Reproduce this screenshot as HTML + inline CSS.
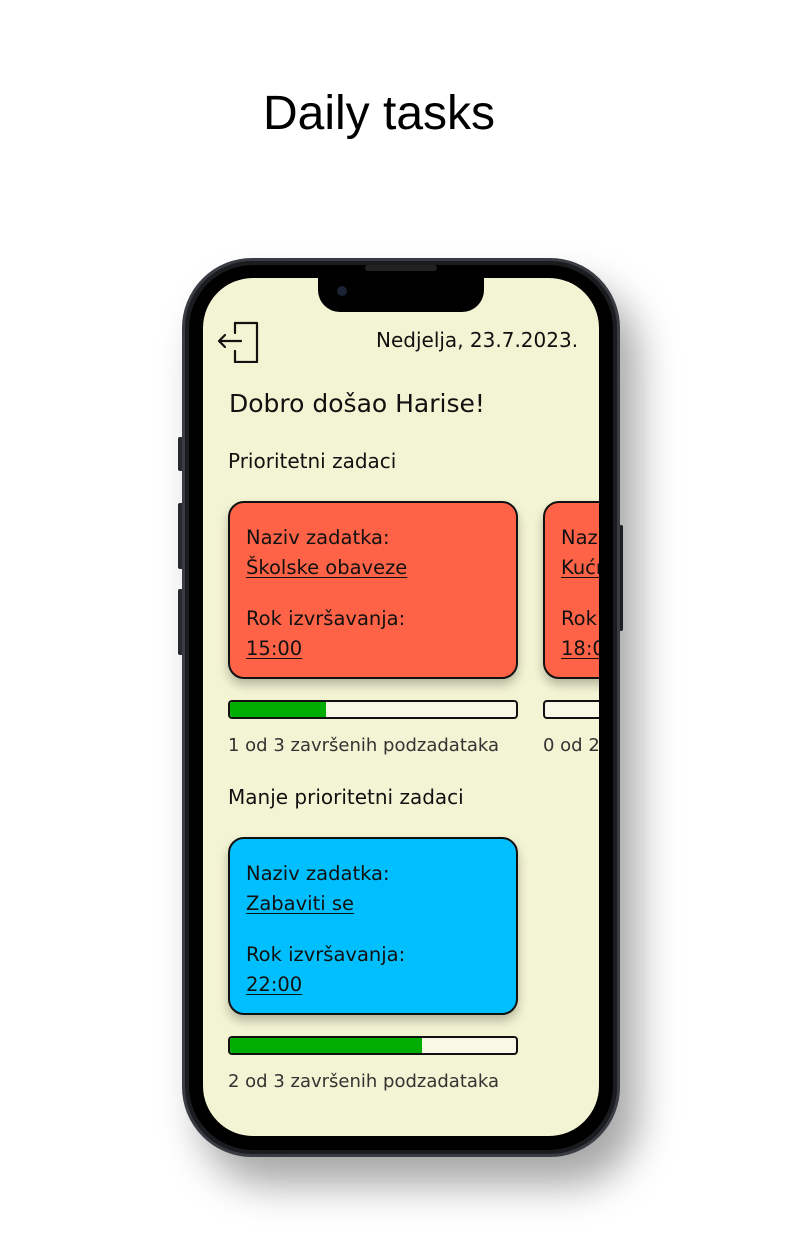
<!DOCTYPE html>
<html><head><meta charset="utf-8"><style>
*{margin:0;padding:0;box-sizing:border-box}
body{width:802px;height:1240px;background:#fff;position:relative;overflow:hidden;font-family:"Liberation Sans",sans-serif}
.a{position:absolute}
.t{font-family:"DejaVu Sans","Liberation Sans",sans-serif;color:#111;white-space:nowrap}
.card{position:absolute;border:2px solid #111;border-radius:16px;box-shadow:0 6px 10px rgba(0,0,0,.25)}
.bar{position:absolute;height:19px;border:2px solid #111;border-radius:4px;background:#f8f8e6;overflow:hidden}
.bar i{position:absolute;left:0;top:0;bottom:0;background:#00ad00}
u{text-underline-offset:3px}
</style></head><body>
<div class="a" style="left:0;top:86px;width:758px;text-align:center;font-size:48px;color:#000">Daily tasks</div>
<!-- side buttons -->
<div class="a" style="left:178px;top:437px;width:6px;height:34px;background:#2a2c33;border-radius:2px"></div>
<div class="a" style="left:178px;top:503px;width:6px;height:66px;background:#2a2c33;border-radius:2px"></div>
<div class="a" style="left:178px;top:589px;width:6px;height:66px;background:#2a2c33;border-radius:2px"></div>
<div class="a" style="left:618px;top:525px;width:5px;height:106px;background:#2a2c33;border-radius:2px"></div>
<!-- body -->
<div class="a" style="left:182px;top:258px;width:438px;height:899px;border-radius:70px;background:#1b1c20;border:3px solid #3a3c44;box-shadow:18px 28px 40px rgba(0,0,0,.35)"></div>
<div class="a" style="left:189px;top:265px;width:424px;height:885px;border-radius:64px;background:#000"></div>
<div class="a" style="left:203px;top:278px;width:396px;height:858px;border-radius:50px;background:#f3f4d3;overflow:hidden">
  <div class="a" style="left:115px;top:-2px;width:166px;height:36px;background:#000;border-radius:0 0 22px 22px"></div>
  <div class="a" style="left:134px;top:8px;width:10px;height:10px;background:#1a2233;border-radius:50%"></div>
  <svg class="a" style="left:14px;top:43px" width="46" height="42" viewBox="0 0 46 42" fill="none" stroke="#111" stroke-width="2.2" stroke-linecap="round" stroke-linejoin="round">
    <path d="M18 2h22v39H18v-11"/><path d="M18 2v10"/><path d="M2 20h22M8 14l-6 6 6 6"/></svg>
  <div class="t a" style="left:173px;top:50px;font-size:20px">Nedjelja, 23.7.2023.</div>
  <div class="t a" style="left:26px;top:111px;font-size:25px">Dobro došao Harise!</div>
  <div class="t a" style="left:25px;top:171px;font-size:20px">Prioritetni zadaci</div>
  <div class="card" style="left:25px;top:223px;width:290px;height:178px;background:#ff6347"></div>
  <div class="t a" style="left:43px;top:245px;font-size:19.5px;line-height:30px">Naziv zadatka:<br><u>Školske obaveze</u></div>
  <div class="t a" style="left:43px;top:326px;font-size:19.5px;line-height:30px">Rok izvršavanja:<br><u>15:00</u></div>
  <div class="card" style="left:340px;top:223px;width:290px;height:178px;background:#ff6347"></div>
  <div class="t a" style="left:358px;top:245px;font-size:19.5px;line-height:30px">Naziv zadatka:<br><u>Kućni poslovi</u></div>
  <div class="t a" style="left:358px;top:326px;font-size:19.5px;line-height:30px">Rok izvršavanja:<br><u>18:00</u></div>
  <div class="bar" style="left:25px;top:422px;width:290px"><i style="width:96px"></i></div>
  <div class="bar" style="left:340px;top:422px;width:290px"></div>
  <div class="t a" style="left:25px;top:457px;font-size:18px;color:#333">1 od 3 završenih podzadataka</div>
  <div class="t a" style="left:340px;top:457px;font-size:18px;color:#333">0 od 2 završenih podzadataka</div>
  <div class="t a" style="left:25px;top:507px;font-size:20px">Manje prioritetni zadaci</div>
  <div class="card" style="left:25px;top:559px;width:290px;height:178px;background:#00bfff"></div>
  <div class="t a" style="left:43px;top:581px;font-size:19.5px;line-height:30px">Naziv zadatka:<br><u>Zabaviti se</u></div>
  <div class="t a" style="left:43px;top:662px;font-size:19.5px;line-height:30px">Rok izvršavanja:<br><u>22:00</u></div>
  <div class="bar" style="left:25px;top:758px;width:290px"><i style="width:192px"></i></div>
  <div class="t a" style="left:25px;top:793px;font-size:18px;color:#333">2 od 3 završenih podzadataka</div>
</div>
<div class="a" style="left:365px;top:265px;width:72px;height:6px;background:#222;border-radius:3px"></div>
</body></html>
